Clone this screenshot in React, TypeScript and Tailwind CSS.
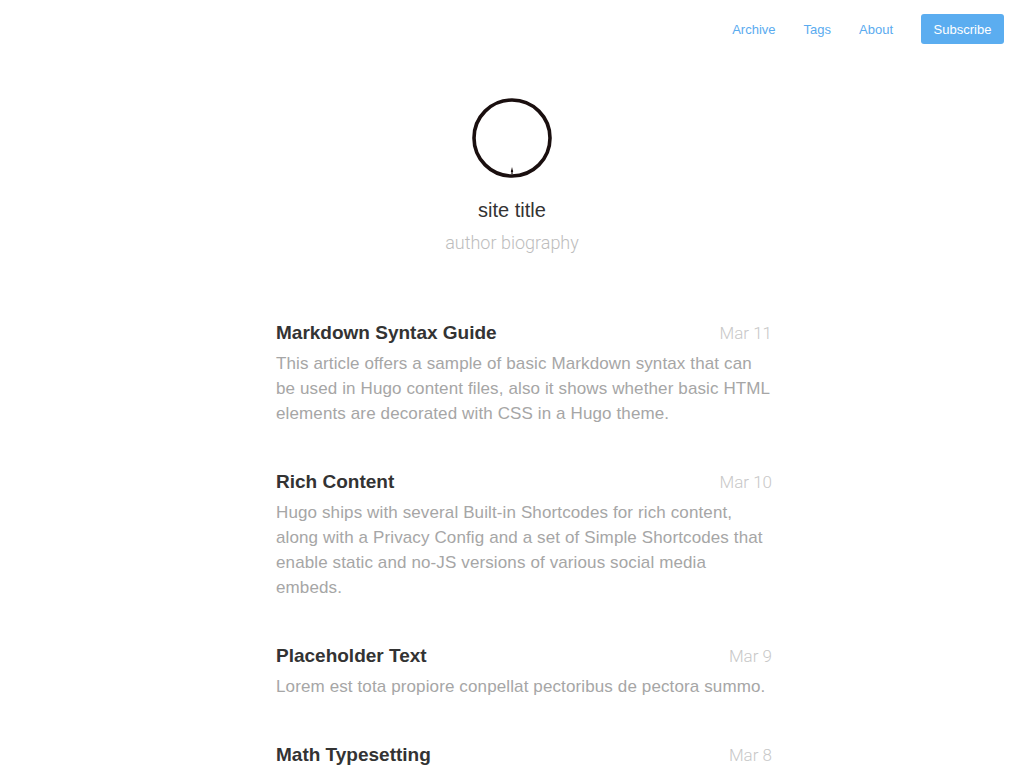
import React from "react";

const posts = [
  {
    title: "Markdown Syntax Guide",
    date: "Mar 11",
    summary:
      "This article offers a sample of basic Markdown syntax that can be used in Hugo content files, also it shows whether basic HTML elements are decorated with CSS in a Hugo theme.",
  },
  {
    title: "Rich Content",
    date: "Mar 10",
    summary:
      "Hugo ships with several Built-in Shortcodes for rich content, along with a Privacy Config and a set of Simple Shortcodes that enable static and no-JS versions of various social media embeds.",
  },
  {
    title: "Placeholder Text",
    date: "Mar 9",
    summary: "Lorem est tota propiore conpellat pectoribus de pectora summo.",
  },
  {
    title: "Math Typesetting",
    date: "Mar 8",
    summary: "Mathematical notation in a Hugo project can be enabled by using third party JavaScript libraries.",
  },
];

const Avatar = () => (
  <svg width="80" height="80" viewBox="0 0 80 80" className="block">
    <circle cx="40" cy="40" r="38" fill="none" stroke="#1a0f0f" strokeWidth="3.6" />
    <path d="M40 69 L41.2 74 L38.8 74 Z" fill="#1a0f0f" />
    <rect x="39.4" y="72" width="1.2" height="4" fill="#1a0f0f" />
  </svg>
);

const light = { fontFamily: 'Roboto, "Liberation Sans", sans-serif' };

export default function App() {
  return (
    <div
      className="min-h-screen bg-white"
      style={{ fontFamily: '"Liberation Sans", Arial, sans-serif' }}
    >
      {/* header nav */}
      <header className="flex items-center justify-end gap-7 pr-5 pt-[14px]">
        <a className="pt-px text-[13px] text-[#5aabef]">Archive</a>
        <a className="pt-px text-[13px] text-[#5aabef]">Tags</a>
        <a className="pt-px text-[13px] text-[#5aabef]">About</a>
        <button
          type="button"
          className="h-[30px] w-[83px] rounded-[3px] bg-[#5badf0] pt-px text-[13px] text-white"
        >
          Subscribe
        </button>
      </header>

      {/* profile */}
      <div className="mt-[54px] flex flex-col items-center">
        <Avatar />
        <h1 className="mt-[18px] text-[20px] leading-[28px] text-[#333]">site title</h1>
        <p className="mt-[7px] text-[18px] leading-[24px] font-light text-[#bdbdbd]" style={light}>
          author biography
        </p>
      </div>

      {/* post list */}
      <main className="mx-auto mt-[63px] w-[520px] pl-6">
        {posts.map((post) => (
          <article key={post.title} className="mb-[41px]">
            <div className="flex items-baseline justify-between">
              <h2 className="text-[19px] leading-[30px] font-bold text-[#333]">{post.title}</h2>
              <span className="text-[17px] leading-[30px] font-light text-[#c8c8c8]" style={light}>
                {post.date}
              </span>
            </div>
            <p className="mt-[3px] text-[17px] leading-[25px] tracking-[0.12px] text-[#a6a6a6]">
              {post.summary}
            </p>
          </article>
        ))}
      </main>
    </div>
  );
}
